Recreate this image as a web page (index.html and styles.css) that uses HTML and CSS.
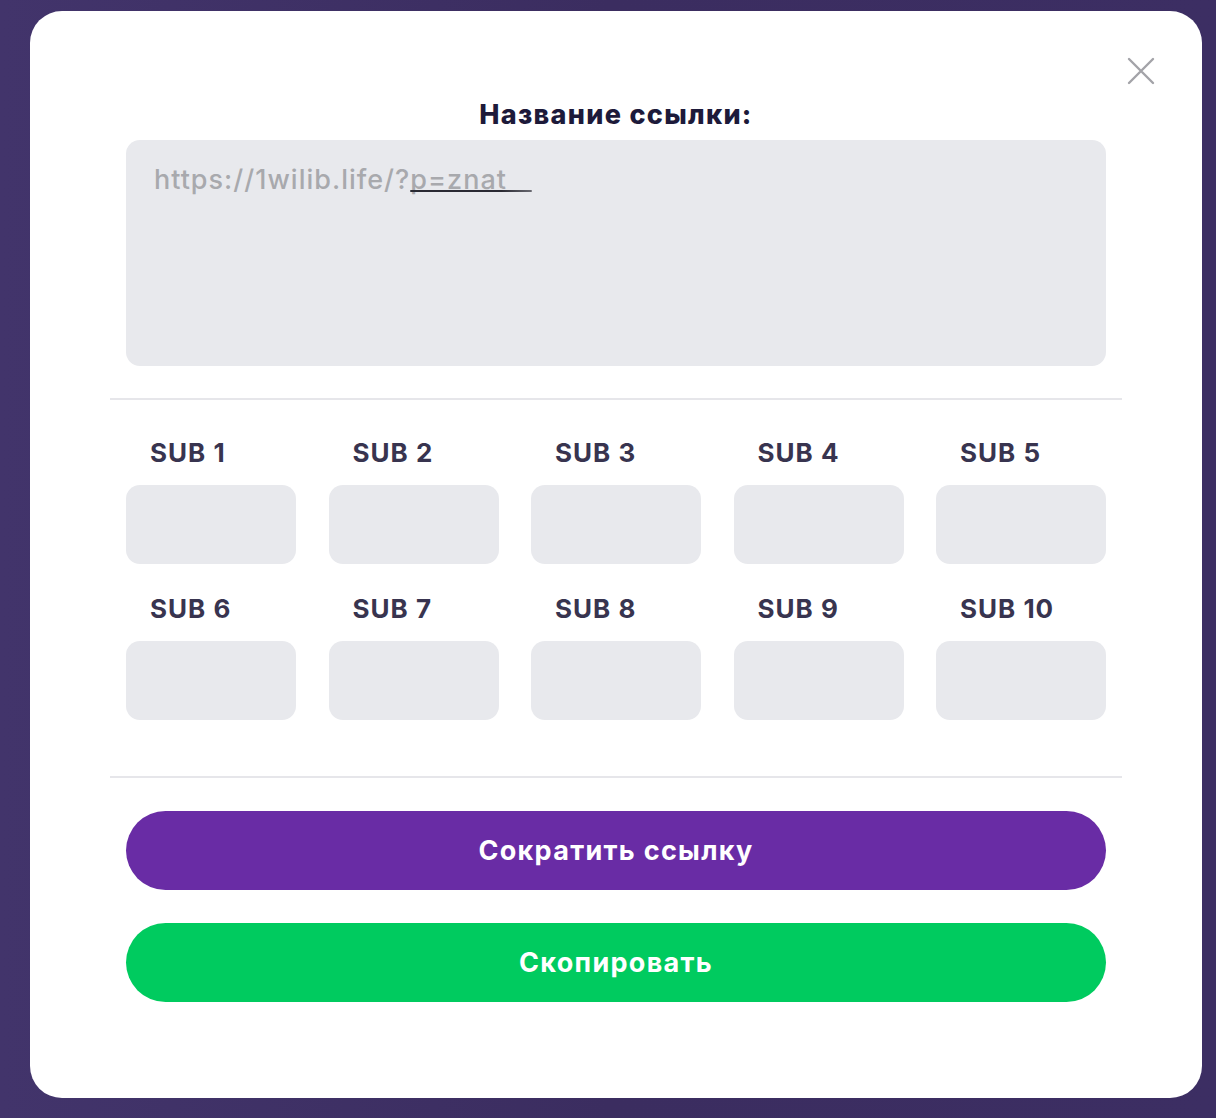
FILE: index.html
```html
<!DOCTYPE html>
<html lang="ru">
<head>
<meta charset="utf-8">
<title>Ссылка</title>
<link rel="stylesheet" href="styles.css">
</head>
<body>
<div class="overlay">
  <div class="modal">
    <button class="close" aria-label="Закрыть">
      <svg width="28" height="28" viewBox="0 0 28 28"><path d="M2 2 L26 26 M26 2 L2 26" stroke="#a3a3a8" stroke-width="2.4" stroke-linecap="round" fill="none"/></svg>
    </button>
    <h2 class="title">Название ссылки:</h2>
    <div class="link-box">https://1wilib.life/?<span class="mark">p=znat</span></div>
    <hr class="divider">
    <div class="subs">
      <div class="sub"><div class="sub-label">SUB 1</div><div class="sub-input"></div></div>
      <div class="sub"><div class="sub-label">SUB 2</div><div class="sub-input"></div></div>
      <div class="sub"><div class="sub-label">SUB 3</div><div class="sub-input"></div></div>
      <div class="sub"><div class="sub-label">SUB 4</div><div class="sub-input"></div></div>
      <div class="sub"><div class="sub-label">SUB 5</div><div class="sub-input"></div></div>
      <div class="sub"><div class="sub-label">SUB 6</div><div class="sub-input"></div></div>
      <div class="sub"><div class="sub-label">SUB 7</div><div class="sub-input"></div></div>
      <div class="sub"><div class="sub-label">SUB 8</div><div class="sub-input"></div></div>
      <div class="sub"><div class="sub-label">SUB 9</div><div class="sub-input"></div></div>
      <div class="sub"><div class="sub-label">SUB 10</div><div class="sub-input"></div></div>
    </div>
    <hr class="divider divider-bottom">
    <div class="actions">
      <button class="btn btn-purple">Сократить ссылку</button>
      <button class="btn btn-green">Скопировать</button>
    </div>
  </div>
</div>
</body>
</html>
```

FILE: styles.css
```css
* { box-sizing: border-box; }
html, body {
  margin: 0;
  padding: 0;
  height: 100%;
}
body {
  background: linear-gradient(90deg, #42346b 0%, #3b2d60 50%, #3c2e63 100%);
  font-family: Inter, Lato, Arial, sans-serif;
}
.overlay {
  padding: 11px 14px 20px 30px;
}
.modal {
  position: relative;
  width: 1172px;
  height: 1087px;
  background: #ffffff;
  border-radius: 32px;
  padding: 87px 80px 96px;
}
.close {
  position: absolute;
  top: 46px;
  right: 47px;
  width: 28px;
  height: 28px;
  padding: 0;
  border: 0;
  background: none;
  display: flex;
}
.title {
  margin: 0 0 8px;
  text-align: center;
  font-size: 27px;
  line-height: 34px;
  font-weight: 800;
  letter-spacing: 1.3px;
  color: #1d1a3a;
}
.link-box {
  margin: 0 16px;
  height: 226px;
  background: #e8e9ed;
  border-radius: 14px;
  padding: 22px 28px;
  font-size: 27px;
  line-height: 36px;
  letter-spacing: 1px;
  font-weight: 500;
  color: #a8a9ad;
}
.mark {
  position: relative;
}
.mark::after {
  content: "";
  position: absolute;
  left: 0;
  bottom: 4px;
  width: 122px;
  height: 2px;
  border-radius: 1px;
  background: linear-gradient(90deg, #2a2a33 0%, #2a2a33 75%, #6a6a72 100%);
}
.divider {
  margin: 32px 0 0;
  border: 0;
  height: 2px;
  background: #e6e6ea;
}
.subs {
  margin: 37px 16px 0;
  display: grid;
  grid-template-columns: repeat(5, 170px);
  column-gap: 32.5px;
  row-gap: 29px;
}
.sub-label {
  padding-left: 24px;
  font-size: 26px;
  line-height: 32px;
  font-weight: 700;
  letter-spacing: 1px;
  color: #38344f;
  margin-bottom: 16px;
}
.sub-input {
  height: 79px;
  background: #e8e9ed;
  border-radius: 14px;
}
.divider-bottom {
  margin-top: 56px;
}
.actions {
  margin: 33px 16px 0;
  display: flex;
  flex-direction: column;
  gap: 33px;
}
.btn {
  height: 79px;
  border: 0;
  border-radius: 40px;
  color: #ffffff;
  font-family: Inter, Lato, Arial, sans-serif;
  font-size: 27px;
  font-weight: 700;
  letter-spacing: 1.3px;
}
.btn-purple { background: #692ca5; }
.btn-green { background: #00cb5f; }
```
